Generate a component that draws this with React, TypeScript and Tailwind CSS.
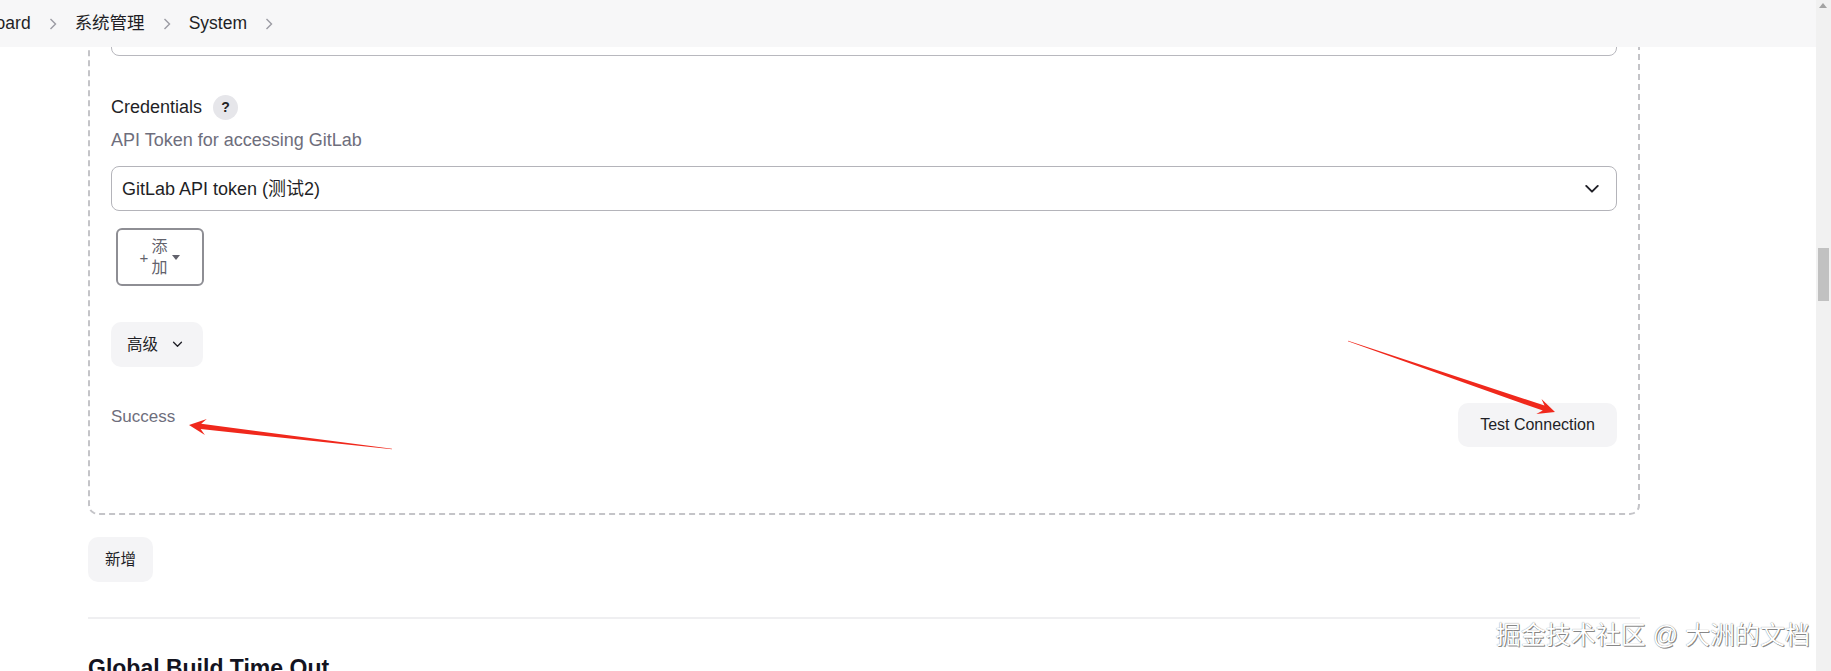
import React from 'react';

type Pt = [number, number];

// tapered annotation arrow, tail -> tip
const arrowPoints = (x1: number, y1: number, x2: number, y2: number) => {
  const dx = x2 - x1;
  const dy = y2 - y1;
  const len = Math.hypot(dx, dy);
  const ux = dx / len;
  const uy = dy / len;
  const px = -uy;
  const py = ux;
  const p = (back: number, side: number): Pt => [x2 - ux * back + px * side, y2 - uy * back + py * side];
  const pts: Pt[] = [p(0, 0), p(17, 8), p(12, 2.6), [x1 + px * 0.3, y1 + py * 0.3], [x1 - px * 0.3, y1 - py * 0.3], p(12, -2.6), p(17, -8)];
  return pts.map(([x, y]) => `${x.toFixed(1)},${y.toFixed(1)}`).join(' ');
};

const Crumb = () => (
  <svg width="8" height="12" viewBox="0 0 8 12" fill="none" stroke="#9b9ba3" strokeWidth="1.4">
    <path d="M1.5 1 L6.5 6 L1.5 11" />
  </svg>
);

const ChevronDown = ({ w = 16, stroke = '#1f1f26' }: { w?: number; stroke?: string }) => (
  <svg width={w} height={w * 0.6} viewBox="0 0 16 10" fill="none" stroke={stroke} strokeWidth="2" strokeLinecap="round" strokeLinejoin="round">
    <path d="M2 2 L8 8 L14 2" />
  </svg>
);

const App: React.FC = () => {
  return (
    <div className="flex h-[671px] w-[1831px] overflow-hidden bg-white font-['Liberation_Sans','Noto_Sans_CJK_SC',sans-serif] text-[#1f1f26]">
      <div className="relative flex-1 overflow-hidden">
        <main className="pl-[88px]">
          <div className="w-[1552px]">
            <div className="-mt-[30px] rounded-[10px] border-2 border-dashed border-[#c4c4c8] pb-[66px] pl-[21px] pr-[21px] pt-[39px]">
              <div className="h-[45px] rounded-[8px] border-[1.5px] border-[#b8b8be]" />

              <div className="mt-[39px] flex h-[24px] items-center gap-[11px]">
                <span className="text-[18px] leading-[24px]">Credentials</span>
                <span className="flex h-[25px] w-[25px] items-center justify-center rounded-full bg-[#e6e6ea] text-[14px] font-bold text-[#222]">?</span>
              </div>
              <div className="mt-[9px] text-[18px] leading-[24px] text-[#6e6e7c]">API Token for accessing GitLab</div>

              <div className="mt-[14px] flex h-[45px] items-center justify-between rounded-[8px] border-[1.5px] border-[#b4b4ba] pl-[10px] pr-[16px]">
                <span className="text-[18px] leading-[24px]">GitLab API token (测试2)</span>
                <ChevronDown />
              </div>

              <button className="ml-[5px] mt-[17px] flex h-[58px] w-[88px] items-center justify-center gap-[3px] rounded-[6px] border-2 border-[#8e8e94] text-[#62626c]">
                <span className="text-[15px] font-light leading-none">+</span>
                <span className="flex flex-col text-[16px] leading-[21px]">
                  <span>添</span>
                  <span>加</span>
                </span>
                <span className="ml-[2px] h-0 w-0 border-x-[4px] border-t-[5px] border-x-transparent border-t-[#62626c]" />
              </button>

              <button className="mt-[36px] flex h-[45px] w-[92px] items-center gap-[14px] rounded-[10px] bg-[#f4f4f6] pl-[16px] text-[15.5px]">
                <span>高级</span>
                <ChevronDown w={11} />
              </button>

              <div className="mt-[36px] flex items-start justify-between">
                <span className="mt-[2px] text-[17px] leading-[24px] text-[#6e6e7c]">Success</span>
                <button className="flex h-[44px] w-[159px] items-center justify-center rounded-[10px] bg-[#f4f4f6] text-[16px]">
                  Test Connection
                </button>
              </div>
            </div>

            <button className="mt-[22px] flex h-[45px] w-[65px] items-center justify-center rounded-[10px] bg-[#f4f4f6] text-[15.5px]">
              新增
            </button>

            <div className="mt-[35px] h-[2px] bg-[#efeff1]" />

            <h2 className="mt-[34px] text-[23px] font-bold leading-[30px] text-[#14141f]">Global Build Time Out</h2>
          </div>
        </main>

        <header className="absolute inset-x-0 top-0 flex h-[47px] items-center gap-[18px] bg-[#f7f7f8] text-[17.5px]">
          <span className="-ml-[55px]">Dashboard</span>
          <Crumb />
          <span>系统管理</span>
          <Crumb />
          <span>System</span>
          <Crumb />
        </header>
      </div>

      <div className="relative w-[15px] bg-[#f1f1f1]">
        <span className="absolute left-[3px] top-[3px] h-0 w-0 border-x-[4.5px] border-b-[5px] border-x-transparent border-b-[#a3a3a3]" />
        <div className="absolute left-[2px] top-[248px] h-[53px] w-[11px] bg-[#c1c1c1]" />
      </div>

      <svg className="pointer-events-none absolute left-0 top-0" width="1831" height="671">
        <polygon points={arrowPoints(392, 449, 189, 425)} fill="#f0281c" />
        <polygon points={arrowPoints(1348, 341, 1555, 412)} fill="#f0281c" />
      </svg>

      <div className="pointer-events-none absolute right-[21px] top-[618px] text-[25px] leading-[34px] text-white [text-shadow:1px_1px_0_rgba(0,0,0,0.45),0_0_1px_rgba(0,0,0,0.55)]">
        掘金技术社区 @ 大洲的文档
      </div>
    </div>
  );
};

export default App;
